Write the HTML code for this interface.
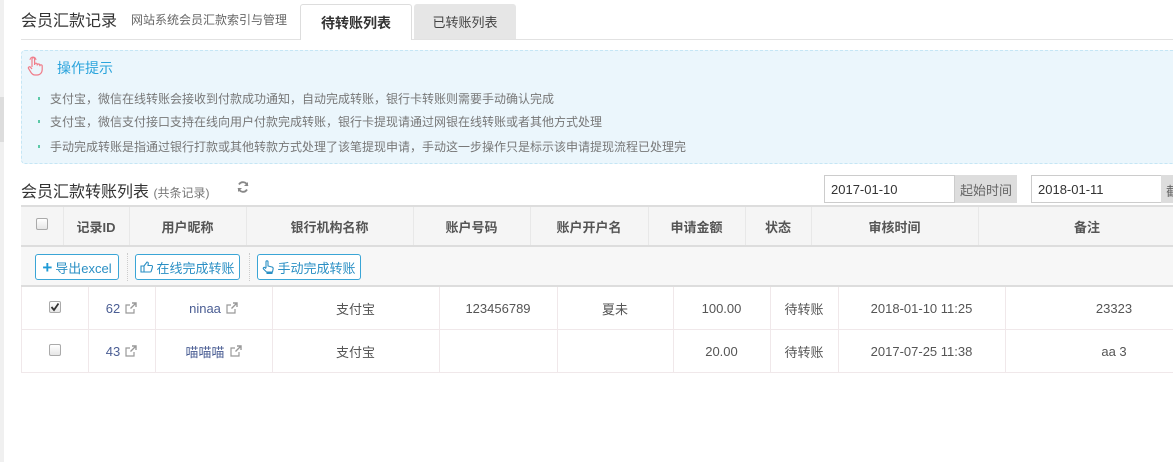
<!DOCTYPE html>
<html><head><meta charset="utf-8"><style>
*{margin:0;padding:0;box-sizing:border-box}
body{width:1173px;height:462px;overflow:hidden;background:#fff;position:relative;font-family:"Liberation Sans","Noto Sans CJK SC",sans-serif;color:#555}
.a{position:absolute;white-space:nowrap}
.c{position:absolute;display:flex;align-items:center;justify-content:center;white-space:nowrap}
.vl{position:absolute;width:1px}
.cb{position:absolute;width:12px;height:12px;border:1px solid #aaa;border-radius:2px;background:linear-gradient(#fff,#e6e6e6)}
.btn{position:absolute;top:254px;height:26px;border:1px solid #3aa5d6;border-radius:3px;background:#fff;color:#2a8fc4;font-size:13px;display:flex;align-items:center;justify-content:center;gap:3px}
.id{color:#4b5e94}
</style></head><body>
<svg width="0" height="0" style="position:absolute"><defs><symbol id="ext" viewBox="0 0 12 12"><path d="M9 7v4H1V3h4" fill="none" stroke="#999" stroke-width="1.2"/><path d="M7 1h4v4M11 1L5.5 6.5" fill="none" stroke="#999" stroke-width="1.4"/></symbol></defs></svg>
<div class="a" style="left:0;top:0;width:4px;height:462px;background:#f0f0f0"></div>
<div class="a" style="left:0;top:97px;width:4px;height:45px;background:#ddd"></div>

<div class="a" style="left:21px;top:7px;font-size:16px;color:#333">会员汇款记录</div>
<div class="a" style="left:131px;top:11px;font-size:12px;color:#666">网站系统会员汇款索引与管理</div>
<div class="a" style="left:21px;top:39px;width:1152px;height:1px;background:#e2e2e2"></div>
<div class="c" style="left:300px;top:4px;width:112px;height:36px;background:#fff;border:1px solid #ddd;border-bottom:none;border-radius:3px 3px 0 0;font-size:14px;font-weight:bold;color:#333">待转账列表</div>
<div class="c" style="left:414px;top:4px;width:102px;height:35px;background:#e6e6e6;border-radius:3px 3px 0 0;font-size:13px;color:#444">已转账列表</div>

<div class="a" style="left:21px;top:50px;width:1160px;height:114px;background:#ebf6fc;border:1px dashed #c5e6f5;border-radius:4px"></div>
<svg class="a" style="left:27px;top:56px" width="16" height="20" viewBox="0 0 16 20"><path d="M5 11V3a1.3 1.3 0 0 1 2.6 0v6M7.6 8.5a1.3 1.3 0 0 1 2.6 0v1M10.2 9.3a1.3 1.3 0 0 1 2.6 0v1M12.8 10a1.2 1.2 0 0 1 2.4 0v3.5c0 3-2 5.5-5 5.5H8c-2 0-3-1-4-2.5L1.5 12.5a1.2 1.2 0 0 1 2-1.3L5 13" fill="none" stroke="#f07d8a" stroke-width="1.2"/><path d="M3 4a3 3 0 0 1 6 0" fill="none" stroke="#f07d8a" stroke-width="1"/></svg>
<div class="a" style="left:57px;top:58px;font-size:14px;color:#2aa4dc">操作提示</div>
<div class="a" style="left:38px;top:97px;width:2px;height:3px;background:#5cc9a7"></div>
<div class="a" style="left:38px;top:120px;width:2px;height:3px;background:#5cc9a7"></div>
<div class="a" style="left:38px;top:145px;width:2px;height:3px;background:#5cc9a7"></div>
<div class="a" style="left:50px;top:90px;font-size:12px;color:#777">支付宝，微信在线转账会接收到付款成功通知，自动完成转账，银行卡转账则需要手动确认完成</div>
<div class="a" style="left:50px;top:113px;font-size:12px;color:#777">支付宝，微信支付接口支持在线向用户付款完成转账，银行卡提现请通过网银在线转账或者其他方式处理</div>
<div class="a" style="left:50px;top:138px;font-size:12px;color:#777">手动完成转账是指通过银行打款或其他转款方式处理了该笔提现申请，手动这一步操作只是标示该申请提现流程已处理完</div>

<div class="a" style="left:21px;top:178px;font-size:16px;color:#333">会员汇款转账列表 <span style="font-size:12px;color:#777">(共条记录)</span></div>
<svg class="a" style="left:237px;top:181px" width="12" height="12" viewBox="0 0 12 12"><path d="M10.5 5A4.6 4.6 0 0 0 2 3.5M1.5 7A4.6 4.6 0 0 0 10 8.5" fill="none" stroke="#888" stroke-width="1.8"/><path d="M11 1v4H7zM1 11V7h4z" fill="#888"/></svg>

<div class="a" style="left:824px;top:175px;width:131px;height:28px;border:1px solid #ccc;font-size:13px;color:#333;padding:6px 0 0 6px">2017-01-10</div>
<div class="c" style="left:955px;top:175px;width:62px;height:28px;background:#ddd;font-size:13px;color:#666">起始时间</div>
<div class="a" style="left:1031px;top:175px;width:131px;height:28px;border:1px solid #ccc;font-size:13px;color:#333;padding:6px 0 0 6px">2018-01-11</div>
<div class="a" style="left:1161px;top:175px;width:20px;height:28px;background:#ddd;font-size:13px;color:#666;padding:6px 0 0 5px;overflow:hidden">截</div>

<div class="a" style="left:21px;top:205px;width:1152px;height:42px;background:#f5f5f5;border-top:2px solid #ddd;border-bottom:2px solid #ddd"></div>
<div class="vl" style="left:63px;top:207px;height:38px;background:#e8e8e8"></div>
<div class="vl" style="left:129px;top:207px;height:38px;background:#e8e8e8"></div>
<div class="vl" style="left:246px;top:207px;height:38px;background:#e8e8e8"></div>
<div class="vl" style="left:413px;top:207px;height:38px;background:#e8e8e8"></div>
<div class="vl" style="left:530px;top:207px;height:38px;background:#e8e8e8"></div>
<div class="vl" style="left:648px;top:207px;height:38px;background:#e8e8e8"></div>
<div class="vl" style="left:745px;top:207px;height:38px;background:#e8e8e8"></div>
<div class="vl" style="left:811px;top:207px;height:38px;background:#e8e8e8"></div>
<div class="vl" style="left:978px;top:207px;height:38px;background:#e8e8e8"></div>
<div class="cb" style="left:36px;top:218px"></div>
<div style="position:absolute;top:207px;height:38px;left:0;width:1173px;font-size:13px;font-weight:bold;color:#555">
<div class="c" style="left:63px;width:66px;height:38px">记录ID</div>
<div class="c" style="left:129px;width:117px;height:38px">用户昵称</div>
<div class="c" style="left:246px;width:167px;height:38px">银行机构名称</div>
<div class="c" style="left:413px;width:117px;height:38px">账户号码</div>
<div class="c" style="left:530px;width:118px;height:38px">账户开户名</div>
<div class="c" style="left:648px;width:97px;height:38px">申请金额</div>
<div class="c" style="left:745px;width:66px;height:38px">状态</div>
<div class="c" style="left:811px;width:167px;height:38px">审核时间</div>
<div class="c" style="left:978px;width:218px;height:38px">备注</div>
</div>

<div class="a" style="left:21px;top:247px;width:1152px;height:40px;background:#f7f7f7;border-bottom:2px solid #ddd"></div>
<div class="vl" style="left:127px;top:253px;height:28px;border-left:1px dotted #ccc"></div>
<div class="vl" style="left:249px;top:253px;height:28px;border-left:1px dotted #ccc"></div>
<div class="btn" style="left:35px;width:84px"><span style="color:#1e9ad6;font-weight:bold;font-size:17px;line-height:1">+</span>导出excel</div>
<div class="btn" style="left:135px;width:105px"><svg width="13" height="12" viewBox="0 0 13 12"><path d="M1 5h3v6H1zM4 5l3-4c1 0 1.5.7 1.2 2L8 4.5h3.5c.8 0 1.2.8 1 1.5l-1.3 4.3c-.2.5-.6.7-1 .7H4" fill="none" stroke="#2a8fc4" stroke-width="1.1"/></svg>在线完成转账</div>
<div class="btn" style="left:257px;width:104px"><svg width="12" height="14" viewBox="0 0 12 14"><path d="M4 8V1.8a1 1 0 0 1 2 0V6l4 1c1 .3 1.3 1 1.1 2L10.5 12H4.5L1.5 9a1 1 0 0 1 1.4-1.4L4 8.6" fill="none" stroke="#2a8fc4" stroke-width="1.1"/><rect x="4.5" y="12" width="6" height="2" fill="#2a8fc4"/></svg>手动完成转账</div>

<div class="a" style="left:21px;top:329px;width:1152px;height:1px;background:#f0e8ea"></div>
<div class="a" style="left:21px;top:372px;width:1152px;height:1px;background:#f0e8ea"></div>
<div class="vl" style="left:21px;top:287px;height:86px;background:#f0e8ea"></div>
<div class="vl" style="left:88px;top:287px;height:86px;background:#f0e8ea"></div>
<div class="vl" style="left:155px;top:287px;height:86px;background:#f0e8ea"></div>
<div class="vl" style="left:272px;top:287px;height:86px;background:#f0e8ea"></div>
<div class="vl" style="left:439px;top:287px;height:86px;background:#f0e8ea"></div>
<div class="vl" style="left:557px;top:287px;height:86px;background:#f0e8ea"></div>
<div class="vl" style="left:673px;top:287px;height:86px;background:#f0e8ea"></div>
<div class="vl" style="left:770px;top:287px;height:86px;background:#f0e8ea"></div>
<div class="vl" style="left:838px;top:287px;height:86px;background:#f0e8ea"></div>
<div class="vl" style="left:1005px;top:287px;height:86px;background:#f0e8ea"></div>

<div class="cb" style="left:49px;top:301px"></div>
<svg class="a" style="left:50px;top:302px" width="10" height="10" viewBox="0 0 10 10"><path d="M1.5 5l2.5 3L8.5 1.5" fill="none" stroke="#333" stroke-width="1.8"/></svg>
<div class="cb" style="left:49px;top:344px"></div>

<div style="position:absolute;top:287px;left:0;width:1173px;height:42px;font-size:13px">
<div class="c id" style="left:88px;width:67px;height:42px">62<svg width="12" height="12" style="margin-left:5px"><use href="#ext"/></svg></div>
<div class="c id" style="left:155px;width:117px;height:42px">ninaa<svg width="12" height="12" style="margin-left:5px"><use href="#ext"/></svg></div>
<div class="c" style="left:272px;width:167px;height:42px">支付宝</div>
<div class="c" style="left:439px;width:118px;height:42px">123456789</div>
<div class="c" style="left:557px;width:116px;height:42px">夏未</div>
<div class="c" style="left:673px;width:97px;height:42px">100.00</div>
<div class="c" style="left:770px;width:68px;height:42px">待转账</div>
<div class="c" style="left:838px;width:167px;height:42px">2018-01-10 11:25</div>
<div class="c" style="left:1005px;width:218px;height:42px">23323</div>
</div>
<div style="position:absolute;top:330px;left:0;width:1173px;height:42px;font-size:13px">
<div class="c id" style="left:88px;width:67px;height:42px">43<svg width="12" height="12" style="margin-left:5px"><use href="#ext"/></svg></div>
<div class="c id" style="left:155px;width:117px;height:42px">喵喵喵<svg width="12" height="12" style="margin-left:5px"><use href="#ext"/></svg></div>
<div class="c" style="left:272px;width:167px;height:42px">支付宝</div>
<div class="c" style="left:673px;width:97px;height:42px">20.00</div>
<div class="c" style="left:770px;width:68px;height:42px">待转账</div>
<div class="c" style="left:838px;width:167px;height:42px">2017-07-25 11:38</div>
<div class="c" style="left:1005px;width:218px;height:42px">aa 3</div>
</div>
</body></html>
